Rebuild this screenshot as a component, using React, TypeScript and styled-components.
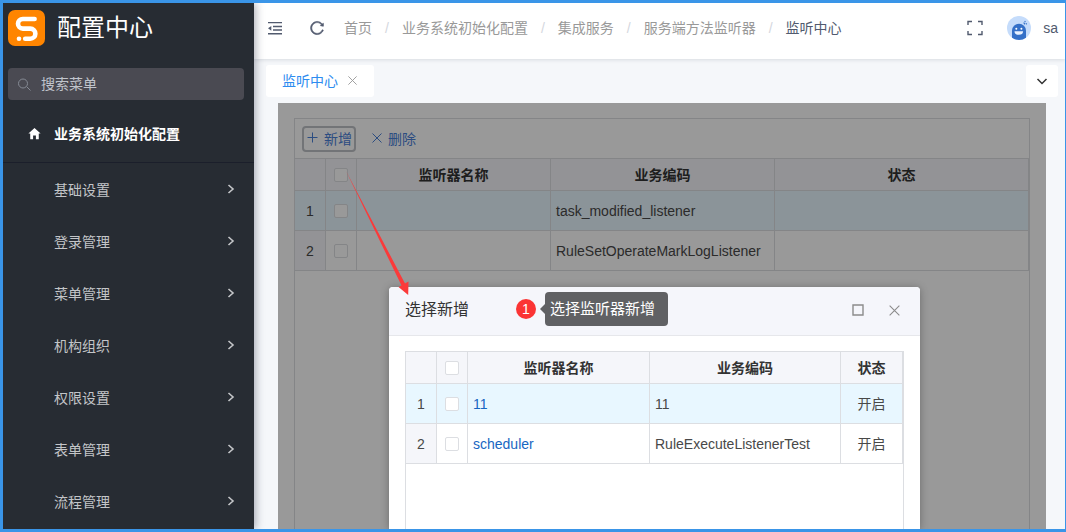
import React from "react";
import styled, { createGlobalStyle } from "styled-components";
import { AiOutlineReload } from "react-icons/ai";
import { IoMdHome } from "react-icons/io";

const GlobalStyle = createGlobalStyle`
  *, *::before, *::after { box-sizing: border-box; }
  body {
    margin: 0;
    font-family: "Liberation Sans", "Noto Sans CJK SC", sans-serif;
    font-size: 14px;
    color: #333;
  }
  button { font-family: inherit; font-size: inherit; cursor: pointer; }
  svg { display: block; flex: none; }
`;

const Frame = styled.div`
  display: flex;
  height: 100vh;
  overflow: hidden;
  border: 3px solid #3a95e8;
  border-right-width: 1px;
  background: #f5f7fa;
`;

const Sidebar = styled.aside`
  position: relative;
  z-index: 1;
  flex: none;
  width: 251px;
  background: #272c33;
  box-shadow: 2px 0 8px rgba(29, 35, 60, 0.35);
`;

const Brand = styled.div`
  display: flex;
  align-items: center;
  gap: 12px;
  height: 50px;
  padding: 0 5px;
  color: #fff;
  font-size: 24px;
  line-height: 32px;
`;

const SearchBox = styled.label`
  display: flex;
  align-items: center;
  gap: 10px;
  height: 32px;
  margin: 15px 10px 0 5px;
  padding: 0 10px;
  border-radius: 4px;
  background: #4a4a52;
  color: #858a94;
`;

const SearchInput = styled.input`
  flex: 1;
  min-width: 0;
  padding: 0;
  border: 0;
  outline: 0;
  background: transparent;
  color: #fff;
  font: inherit;
  &::placeholder { color: #c0c4cc; opacity: 1; }
`;

const MenuHead = styled.a`
  display: flex;
  align-items: center;
  gap: 12px;
  height: 56px;
  margin-top: 6px;
  padding: 0 0 2px 24px;
  color: #fff;
  font-weight: 700;
  text-decoration: none;
`;

const MenuList = styled.nav`
  border-top: 1px solid #1b1f2b;
`;

const MenuItem = styled.a`
  display: flex;
  align-items: center;
  justify-content: space-between;
  height: 52px;
  padding: 0 18px 0 51px;
  color: #c3c5c8;
  text-decoration: none;
`;

const Main = styled.div`
  display: flex;
  flex: 1;
  flex-direction: column;
  min-width: 0;
`;

const TopBar = styled.header`
  display: flex;
  flex: none;
  align-items: center;
  height: 56px;
  padding: 0 7px 6px 13px;
  background: #fff;
  box-shadow: 0 1px 4px rgba(0, 21, 41, 0.12);
  color: #515a6e;
`;

const IconButton = styled.button<{ $size?: number }>`
  display: flex;
  align-items: center;
  justify-content: center;
  width: ${(p) => p.$size ?? 16}px;
  height: ${(p) => p.$size ?? 16}px;
  padding: 0;
  border: 0;
  background: transparent;
  color: inherit;
`;

const BarTools = styled.div`
  display: flex;
  gap: 26px;
  margin-right: 19px;
`;

const Crumbs = styled.nav`
  display: flex;
  flex: 1;
  white-space: nowrap;
  line-height: 20px;
`;

const Crumb = styled.a<{ $current?: boolean }>`
  color: ${(p) => (p.$current ? "#515a6e" : "#999")};
  text-decoration: none;
  &:not(:last-child)::after {
    content: "/";
    margin: 0 13px;
    color: #d4d7de;
  }
`;

const User = styled.div`
  display: flex;
  align-items: center;
  gap: 12px;
  margin-left: 24px;
`;

const TabBar = styled.div`
  display: flex;
  flex: none;
  justify-content: space-between;
  padding: 6px 7px 6px 12px;
`;

const Tab = styled.div`
  display: flex;
  align-items: center;
  gap: 6px;
  height: 32px;
  padding: 0 14px 2px 16px;
  border-radius: 3px;
  background: #fff;
  color: #999;
`;

const TabLink = styled.a`
  color: #2d8cf0;
  text-decoration: none;
`;

const TabMenu = styled(IconButton)`
  border-radius: 3px;
  background: #fff;
`;

const Page = styled.main`
  position: relative;
  display: flex;
  flex: 1;
  min-height: 0;
  margin: 0 19px 0 24px;
  padding: 15px 16px 0;
  background: #fff;
`;

const Grid = styled.section`
  flex: 1;
  min-width: 0;
  border: 1px solid #dcdee2;
  border-bottom: 0;
`;

const ToolRow = styled.div`
  display: flex;
  align-items: center;
  gap: 10px;
  height: 40px;
  padding: 0 7px;
  border-bottom: 1px solid #dcdee2;
`;

const ToolButton = styled.button<{ $focused?: boolean }>`
  display: flex;
  align-items: center;
  gap: 5px;
  height: 26px;
  padding: 0 2px 1px 3px;
  border: 2px solid ${(p) => (p.$focused ? "#bfc1c6" : "transparent")};
  border-radius: 4px;
  background: transparent;
  color: #4a80d8;
  white-space: nowrap;
`;

const Table = styled.table`
  width: 100%;
  table-layout: fixed;
  border-collapse: separate;
  border-spacing: 0;
`;

const HeadCell = styled.th<{ $width?: number }>`
  width: ${(p) => (p.$width ? `${p.$width}px` : "auto")};
  height: 32px;
  padding: 0;
  border: solid #dcdee2;
  border-width: 0 1px 1px 0;
  background: #f5f6fa;
  line-height: 20px;
`;

const Row = styled.tr<{ $active?: boolean }>`
  background: ${(p) => (p.$active ? "#e8f7ff" : "#fff")};
`;

const Cell = styled.td<{ $center?: boolean; $index?: boolean }>`
  height: 40px;
  padding: 0 ${(p) => (p.$center ? 0 : 5)}px;
  border: solid #dcdee2;
  border-width: 0 1px 1px 0;
  color: #484848;
  line-height: 20px;
  text-align: ${(p) => (p.$center ? "center" : "left")};
  background: ${(p) => (p.$index ? "#f5f6fa" : "transparent")};
`;

const Check = styled.input`
  appearance: none;
  display: block;
  width: 14px;
  height: 14px;
  margin: 0 auto;
  border: 1px solid #dcdee2;
  border-radius: 2px;
  background: #fff;
`;

const NameLink = styled.a`
  color: #1766c2;
  text-decoration: none;
`;

const Mask = styled.div`
  position: absolute;
  inset: 0;
  background: rgba(0, 0, 0, 0.4);
`;

const Dialog = styled.section`
  position: absolute;
  top: 184px;
  right: 126px;
  bottom: 0;
  left: 111px;
  display: flex;
  flex-direction: column;
  border-radius: 4px 4px 0 0;
  background: #fff;
  box-shadow: 0 1px 8px rgba(0, 0, 0, 0.3);
`;

const DialogHead = styled.header`
  display: flex;
  flex: none;
  align-items: center;
  gap: 20px;
  height: 49px;
  padding: 0 18px 2px 16px;
  border-bottom: 1px solid #e6e7eb;
  border-radius: 4px 4px 0 0;
  background: #f5f6fb;
  color: #8c8c8c;
`;

const DialogTitle = styled.h2`
  flex: 1;
  margin: 0;
  color: #333;
  font-size: 16px;
  font-weight: 400;
  line-height: 24px;
`;

const DialogBody = styled.div`
  display: flex;
  flex: 1;
  padding: 15px 16px 0;
`;

const Arrow = styled.svg`
  position: absolute;
  top: 66px;
  left: 66px;
`;

const Callout = styled.div`
  position: absolute;
  top: 5px;
  left: 127px;
  display: flex;
  align-items: center;
  gap: 4px;
`;

const StepBadge = styled.span`
  width: 20px;
  height: 20px;
  border-radius: 50%;
  background: #fb3434;
  color: #fff;
  line-height: 20px;
  text-align: center;
`;

const Tip = styled.div`
  display: flex;
  align-items: center;
  &::before {
    content: "";
    border: solid transparent;
    border-width: 5px 5px 5px 0;
    border-right-color: #606164;
  }
`;

const TipText = styled.span`
  height: 34px;
  padding: 0 13px 0 5px;
  border-radius: 4px;
  background: #606164;
  color: #fff;
  font-size: 15px;
  line-height: 34px;
  white-space: nowrap;
`;

type StrokeProps = { size: number; box?: number; width?: number; d: string };

const Stroke = ({ size, box = size, width = 1, d }: StrokeProps) => (
  <svg width={size} height={size} viewBox={`0 0 ${box} ${box}`} fill="none" stroke="currentColor" strokeWidth={width} aria-hidden="true">
    <path d={d} />
  </svg>
);

const CROSS = "M1.5 1.5L10.5 10.5M10.5 1.5L1.5 10.5";

const Logo = () => (
  <svg width="37" height="36" viewBox="0 0 37 36" aria-hidden="true">
    <rect width="37" height="36" rx="7" fill="#ff8500" />
    <path d="M26.600 9H14.800a4.800 4.800 0 0 0 0 9.600H22.300a5 5 0 0 1 0 10.100H17.200" fill="none" stroke="#fff" strokeWidth="4.600" strokeLinecap="round" strokeLinejoin="round" />
    <circle cx="11" cy="28.7" r="2.3" fill="#fff" />
  </svg>
);

const Avatar = () => (
  <svg width="24" height="24" viewBox="0 0 24 24" aria-hidden="true">
    <circle cx="12" cy="12" r="12" fill="#c5dcfb" />
    <path d="M5 21.7V14.5a7 6.8 0 0 1 14 0v7.2A12 12 0 0 1 5 21.7z" fill="#3470c8" />
    <circle cx="9.3" cy="12.7" r="1" fill="#fff" />
    <circle cx="14.4" cy="12.7" r="1" fill="#fff" />
    <path d="M7.5 15.2h8.6a4.3 3.6 0 0 1-8.6 0z" fill="#e8f1ff" />
    <path d="M17 7l.6.9M19.2 7.600l.2.2M18 5.500l.1.1" stroke="#3470c8" strokeWidth="1.2" strokeLinecap="round" />
  </svg>
);

const OutdentIcon = () => (
  <svg width="16" height="16" viewBox="0 0 16 16" fill="none" stroke="currentColor" strokeWidth="1.4" aria-hidden="true">
    <path d="M1 2.6h14M6 6.5h9M6 10h9M1 13.8h14" />
    <path d="M1 8.3L4.3 5.9v4.8z" fill="currentColor" stroke="none" />
  </svg>
);

const menu = ["基础设置", "登录管理", "菜单管理", "机构组织", "权限设置", "表单管理", "流程管理"];
const crumbs = ["首页", "业务系统初始化配置", "集成服务", "服务端方法监听器", "监听中心"];

type Listener = { name?: string; code: string; status?: string };

const configured: Listener[] = [{ code: "task_modified_listener" }, { code: "RuleSetOperateMarkLogListener" }];
const available: Listener[] = [
  { name: "11", code: "11", status: "开启" },
  { name: "scheduler", code: "RuleExecuteListenerTest", status: "开启" },
];

type ListenerTableProps = { rows: Listener[]; widths: [number, number, number?] };

const ListenerTable = ({ rows, widths }: ListenerTableProps) => (
  <Table>
    <thead>
      <tr>
        <HeadCell $width={31} />
        <HeadCell $width={31}>
          <Check type="checkbox" aria-label="全选" />
        </HeadCell>
        <HeadCell $width={widths[0]}>监听器名称</HeadCell>
        <HeadCell $width={widths[1]}>业务编码</HeadCell>
        <HeadCell $width={widths[2]}>状态</HeadCell>
      </tr>
    </thead>
    <tbody>
      {rows.map((row, i) => (
        <Row key={row.code} $active={i === 0}>
          <Cell $center $index={i !== 0}>{i + 1}</Cell>
          <Cell $center>
            <Check type="checkbox" aria-label={row.code} />
          </Cell>
          <Cell>{row.name && <NameLink href="#">{row.name}</NameLink>}</Cell>
          <Cell>{row.code}</Cell>
          <Cell $center>{row.status}</Cell>
        </Row>
      ))}
    </tbody>
  </Table>
);

export default function App() {
  return (
    <>
      <GlobalStyle />
      <Frame>
        <Sidebar>
          <Brand>
            <Logo />
            配置中心
          </Brand>
          <SearchBox>
            <Stroke size={13} width={1} d="M9.5 5.5a4.5 4.5 0 1 1-9 0a4.5 4.5 0 0 1 9 0M8.7 8.7L12.5 12.5" />
            <SearchInput type="text" placeholder="搜索菜单" aria-label="搜索菜单" />
          </SearchBox>
          <MenuHead href="#">
            <IoMdHome size={15} />
            业务系统初始化配置
          </MenuHead>
          <MenuList>
            {menu.map((label) => (
              <MenuItem href="#" key={label}>
                {label}
                <Stroke size={10} width={1.6} d="M2.5 1L7 5L2.5 9" />
              </MenuItem>
            ))}
          </MenuList>
        </Sidebar>
        <Main>
          <TopBar>
            <BarTools>
              <IconButton aria-label="收起菜单">
                <OutdentIcon />
              </IconButton>
              <IconButton aria-label="刷新">
                <AiOutlineReload size={16} stroke="currentColor" strokeWidth={40} />
              </IconButton>
            </BarTools>
            <Crumbs>
              {crumbs.map((label, i) => (
                <Crumb href="#" key={label} $current={i === crumbs.length - 1}>
                  {label}
                </Crumb>
              ))}
            </Crumbs>
            <IconButton aria-label="全屏">
              <Stroke size={16} width={1.4} d="M1 5V1.5H5M11 1.5H15V5M15 11V14.5H11M5 14.5H1V11" />
            </IconButton>
            <User>
              <Avatar />
              sa
            </User>
          </TopBar>
          <TabBar>
            <Tab>
              <TabLink href="#">监听中心</TabLink>
              <IconButton aria-label="关闭">
                <Stroke size={11} box={12} d={CROSS} />
              </IconButton>
            </Tab>
            <TabMenu $size={32} aria-label="更多标签">
              <Stroke size={12} width={1.5} d="M1.5 4L6 8.5L10.5 4" />
            </TabMenu>
          </TabBar>
          <Page>
            <Grid>
              <ToolRow>
                <ToolButton $focused>
                  <Stroke size={12} d="M5.5 .5V10.5M.5 5.5H10.5" />
                  新增
                </ToolButton>
                <ToolButton>
                  <Stroke size={12} d={CROSS} />
                  删除
                </ToolButton>
              </ToolRow>
              <ListenerTable rows={configured} widths={[194, 224]} />
            </Grid>
            <Mask />
            <Dialog role="dialog" aria-labelledby="picker-title">
              <DialogHead>
                <DialogTitle id="picker-title">选择新增</DialogTitle>
                <IconButton aria-label="最大化">
                  <Stroke size={12} width={1.4} d="M1 1H11V11H1z" />
                </IconButton>
                <IconButton aria-label="关闭">
                  <Stroke size={13} box={12} d={CROSS} />
                </IconButton>
              </DialogHead>
              <DialogBody>
                <Grid>
                  <ListenerTable rows={available} widths={[182, 191, 62]} />
                </Grid>
              </DialogBody>
              <Callout>
                <StepBadge>1</StepBadge>
                <Tip>
                  <TipText>选择监听器新增</TipText>
                </Tip>
              </Callout>
            </Dialog>
            <Arrow width="68" height="130" viewBox="0 0 68 130" aria-hidden="true">
              <path d="M2 2L61 114.500L64.500 112.500L64.200 126L54.500 118L57.500 116.500z" fill="#fb3a3a" />
            </Arrow>
          </Page>
        </Main>
      </Frame>
    </>
  );
}
